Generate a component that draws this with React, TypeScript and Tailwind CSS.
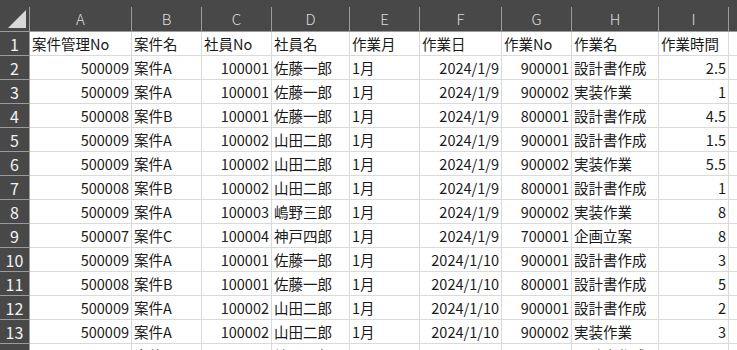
import React from "react";

const cols = [
  { key: "A", w: "w-[102px]" },
  { key: "B", w: "w-[70px]" },
  { key: "C", w: "w-[70px]" },
  { key: "D", w: "w-[78px]" },
  { key: "E", w: "w-[70px]" },
  { key: "F", w: "w-[82px]" },
  { key: "G", w: "w-[70px]" },
  { key: "H", w: "w-[87px]" },
  { key: "I", w: "w-[70px]" },
];

const header = ["案件管理No", "案件名", "社員No", "社員名", "作業月", "作業日", "作業No", "作業名", "作業時間"];

const data: (string | number)[][] = [
  [500009, "案件A", 100001, "佐藤一郎", "1月", "2024/1/9", 900001, "設計書作成", 2.5],
  [500009, "案件A", 100001, "佐藤一郎", "1月", "2024/1/9", 900002, "実装作業", 1],
  [500008, "案件B", 100001, "佐藤一郎", "1月", "2024/1/9", 800001, "設計書作成", 4.5],
  [500009, "案件A", 100002, "山田二郎", "1月", "2024/1/9", 900001, "設計書作成", 1.5],
  [500009, "案件A", 100002, "山田二郎", "1月", "2024/1/9", 900002, "実装作業", 5.5],
  [500008, "案件B", 100002, "山田二郎", "1月", "2024/1/9", 800001, "設計書作成", 1],
  [500009, "案件A", 100003, "嶋野三郎", "1月", "2024/1/9", 900002, "実装作業", 8],
  [500007, "案件C", 100004, "神戸四郎", "1月", "2024/1/9", 700001, "企画立案", 8],
  [500009, "案件A", 100001, "佐藤一郎", "1月", "2024/1/10", 900001, "設計書作成", 3],
  [500008, "案件B", 100001, "佐藤一郎", "1月", "2024/1/10", 800001, "設計書作成", 5],
  [500009, "案件A", 100002, "山田二郎", "1月", "2024/1/10", 900001, "設計書作成", 2],
  [500009, "案件A", 100002, "山田二郎", "1月", "2024/1/10", 900002, "実装作業", 3],
  [500009, "案件A", 100003, "嶋野三郎", "1月", "2024/1/10", 900001, "設計書作成", 4],
];

const rightAligned = (ci: number) => ci === 0 || ci === 2 || ci === 5 || ci === 6 || ci === 8;

export default function App() {
  const font = { fontFamily: '"Noto Sans CJK JP", "Noto Sans", sans-serif' };
  return (
    <div className="w-[737px] h-[350px] overflow-hidden bg-white" style={font}>
      <div className="h-[7px] bg-[#484848]" />
      {/* column header row */}
      <div className="flex h-[25px] bg-[#484848] border-b border-[#9c9c9c]">
        <div className="w-[30px] shrink-0 border-r border-[#9c9c9c] relative">
          <div className="absolute right-[3px] bottom-[3px] w-0 h-0 border-l-[18px] border-l-transparent border-b-[18px] border-b-[#d9d9d9]" />
        </div>
        {cols.map((c) => (
          <div
            key={c.key}
            className={`${c.w} shrink-0 border-r border-[#9c9c9c] flex items-center justify-center text-[15px] font-light text-[#dcdcdc]`}
          >
            {c.key}
          </div>
        ))}
        <div className="flex-1" />
      </div>
      {[header, ...data].map((row, ri) => (
        <div key={ri} className="flex h-[24px]">
          <div className="w-[30px] shrink-0 bg-[#484848] border-r border-b border-[#9c9c9c] flex items-center justify-center text-[16px] text-[#f2f2f2]">
            {ri + 1}
          </div>
          {row.map((v, ci) => (
            <div
              key={ci}
              className={`${cols[ci].w} shrink-0 border-r border-b border-[#dadada] flex items-center text-[14.5px] text-[#1a1a1a] whitespace-nowrap overflow-hidden ${
                ri > 0 && rightAligned(ci) ? "justify-end pr-[2px]" : "justify-start pl-[2px]"
              }`}
            >
              {String(v)}
            </div>
          ))}
          <div className="flex-1 border-b border-[#dadada]" />
        </div>
      ))}
    </div>
  );
}
